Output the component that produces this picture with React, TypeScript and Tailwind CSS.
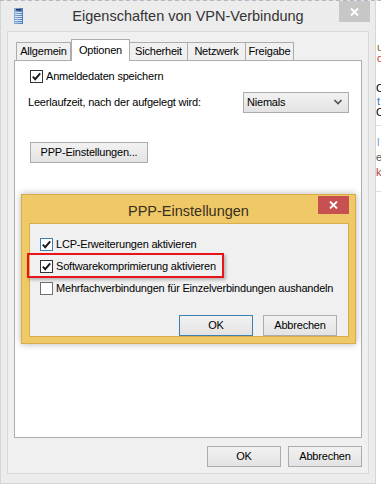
import React from "react";

type BoxProps = { checked: boolean; border: string };

const CheckBox = ({ checked, border }: BoxProps) => (
  <span className={`flex h-[13px] w-[13px] shrink-0 items-center justify-center bg-white border ${border}`}>
    {checked && (
      <svg width="11" height="11" viewBox="0 0 11 11">
        <path d="M1.8 5.6 L4.2 8.2 L9.2 2.4" stroke="#1a1a1a" strokeWidth="1.9" fill="none" />
      </svg>
    )}
  </span>
);

const WinButton = ({ label, className }: { label: string; className: string }) => (
  <button
    className={`flex h-[21px] items-center justify-center bg-linear-to-b from-[#f2f2f2] to-[#e3e3e3] text-[11px] tracking-[-0.2px] text-black ${className}`}
  >
    {label}
  </button>
);

const App = () => {
  return (
    <div className="flex h-[484px] w-[381px] flex-col overflow-hidden bg-white font-['Liberation_Sans',Arial,sans-serif]">
      {/* strip of the desktop behind the window */}
      <div className="h-px w-full shrink-0 bg-[repeating-linear-gradient(90deg,#c8b0a8_0px,#c8b0a8_2px,#a9bedc_2px,#a9bedc_4px,#e6e6e6_4px,#e6e6e6_7px)]" />

      <div className="flex flex-1">
        {/* main window */}
        <div className="relative flex w-[376px] shrink-0 flex-col border border-t-0 border-[#d6d6d6] bg-[#ececec]">
          {/* title bar */}
          <div className="grid h-[30px] shrink-0 grid-cols-[1fr_auto_1fr] items-start">
            <div className="pl-[13px] pt-[7px]">
              <svg width="9" height="16" viewBox="0 0 9 16">
                <defs>
                  <linearGradient id="srv" x1="0" y1="0" x2="1" y2="0">
                    <stop offset="0" stopColor="#8fb0dc" />
                    <stop offset="1" stopColor="#4d78b4" />
                  </linearGradient>
                </defs>
                <rect x="0" y="0" width="9" height="16" fill="url(#srv)" />
                <rect x="2" y="1" width="5" height="1.5" fill="#22385e" />
                <rect x="1" y="4" width="7" height="1" fill="#d8e4f4" />
                <rect x="1" y="6" width="7" height="1" fill="#d8e4f4" />
                <rect x="1" y="8" width="7" height="1" fill="#d8e4f4" />
                <rect x="1" y="10" width="7" height="1" fill="#d8e4f4" />
                <rect x="1" y="12" width="7" height="1" fill="#d8e4f4" />
                <rect x="1" y="14" width="7" height="1" fill="#b8cbe6" />
              </svg>
            </div>
            <div className="pt-[6px] text-[14.5px] leading-[18px] text-[#333]">Eigenschaften von VPN-Verbindung</div>
            <div className="flex justify-end pr-[5px]">
              <div className="flex h-[21px] w-[31px] items-center justify-center bg-[#c7c7c7]">
                <svg width="9" height="8" viewBox="0 0 9 8">
                  <path d="M1 0.5 L8 7.5 M8 0.5 L1 7.5" stroke="#fff" strokeWidth="1.8" />
                </svg>
              </div>
            </div>
          </div>

          {/* client area */}
          <div className="mx-[6px] mb-[9px] flex flex-1 flex-col border border-[#dadada] bg-[#f0f0f0] pl-[6px] pt-[7px]">
            {/* tabs */}
            <div className="relative z-10 flex h-[21px] items-end pl-[2px] text-[11px] tracking-[-0.2px] text-black">
              <div className="flex h-[18px] w-[55px] items-center justify-center border border-b-0 border-[#acacac] bg-[#f0f0f0]">Allgemein</div>
              <div className="mb-[-1px] flex h-[22px] w-[59px] items-start justify-center border border-b-0 border-[#acacac] bg-white pt-[2px]">Optionen</div>
              <div className="-ml-px flex h-[18px] w-[59px] items-center justify-center border border-b-0 border-[#acacac] bg-[#f0f0f0]">Sicherheit</div>
              <div className="-ml-px flex h-[18px] w-[59px] items-center justify-center border border-b-0 border-[#acacac] bg-[#f0f0f0]">Netzwerk</div>
              <div className="-ml-px flex h-[18px] w-[49px] items-center justify-center border border-b-0 border-[#acacac] bg-[#f0f0f0]">Freigabe</div>
            </div>

            {/* tab page */}
            <div className="flex h-[378px] w-[348px] flex-col border border-[#adadad] bg-white pl-[15px] pr-[12px] pt-[9px] text-[11px] tracking-[-0.2px] text-black">
              <div className="flex h-[13px] items-center gap-[3px]">
                <CheckBox checked border="border-[#333]" />
                <span>Anmeldedaten speichern</span>
              </div>
              <div className="mt-[9px] flex h-[20px] items-center justify-between">
                <span className="-ml-[2px]">Leerlaufzeit, nach der aufgelegt wird:</span>
                <div className="flex h-[21px] w-[106px] items-center justify-between border border-[#acacac] bg-linear-to-b from-[#f2f2f2] to-[#e3e3e3] pl-[3px] pr-[6px]">
                  <span>Niemals</span>
                  <svg width="8" height="6" viewBox="0 0 8 6">
                    <path d="M0.5 1 L4 4.5 L7.5 1" stroke="#555" strokeWidth="1.6" fill="none" />
                  </svg>
                </div>
              </div>
              <WinButton label="PPP-Einstellungen..." className="mt-[30px] w-[118px] border border-[#acacac]" />
            </div>

            {/* dialog buttons */}
            <div className="mt-[8px] flex justify-end gap-[7px] pr-[6px]">
              <WinButton label="OK" className="w-[74px] border border-[#acacac]" />
              <WinButton label="Abbrechen" className="w-[74px] border border-[#acacac]" />
            </div>
          </div>
        </div>

        {/* content behind the window */}
        <div className="relative flex-1 text-[11px] leading-[11px]">
          <span className="absolute left-[1px] top-[41px] text-[#8a5a3a]">u</span>
          <span className="absolute left-[1px] top-[52px] text-[#c44]">d</span>
          <span className="absolute left-[0px] top-[82px] text-black">C</span>
          <span className="absolute left-[1px] top-[95px] text-[#3a7abd]">t</span>
          <span className="absolute left-[0px] top-[106px] text-black">C</span>
          <div className="absolute left-0 top-[124px] h-px w-full bg-[#e0e0e0]" />
          <span className="absolute left-[1px] top-[136px] text-[#6fa0d8]">l</span>
          <span className="absolute left-[0px] top-[151px] text-[#555]">e</span>
          <span className="absolute left-[0px] top-[166px] text-[#a44]">k</span>
          <div className="absolute left-0 top-[190px] h-px w-full bg-[#e0e0e0]" />
        </div>
      </div>

      {/* PPP-Einstellungen dialog over the window */}
      <div className="absolute left-[21px] top-[194px] flex h-[150px] w-[335px] flex-col border border-[#d8ab45] bg-[#efc868] shadow-[0_0_7px_rgba(0,0,0,0.3)]">
        <div className="relative flex h-[28px] shrink-0 items-start justify-center">
          <span className="pt-[7px] text-[14.5px] leading-[18px] text-[#3a3020]">PPP-Einstellungen</span>
          <div className="absolute right-[6px] top-[1px] flex h-[18px] w-[31px] items-center justify-center bg-[#c75050]">
            <svg width="9" height="8" viewBox="0 0 9 8">
              <path d="M1 0.5 L8 7.5 M8 0.5 L1 7.5" stroke="#fff" strokeWidth="1.8" />
            </svg>
          </div>
        </div>
        <div className="relative ml-[7px] flex h-[114px] w-[320px] flex-col border border-[#d9ac4c] bg-[#f0f0f0] pl-[10px] pt-[14px] text-[11px] tracking-[-0.2px] text-black">
          <div className="flex h-[13px] items-center gap-[3px]">
            <CheckBox checked border="border-[#3c7fb1]" />
            <span>LCP-Erweiterungen aktivieren</span>
          </div>
          <div className="mt-[9px] flex h-[13px] items-center gap-[3px]">
            <CheckBox checked border="border-[#333]" />
            <span>Softwarekomprimierung aktivieren</span>
          </div>
          <div className="mt-[9px] flex h-[13px] items-center gap-[3px]">
            <CheckBox checked={false} border="border-[#707070]" />
            <span>Mehrfachverbindungen für Einzelverbindungen aushandeln</span>
          </div>
          <div className="mt-[20px] flex gap-[10px] pl-[139px]">
            <WinButton label="OK" className="w-[74px] border border-[#3c7fb1]" />
            <WinButton label="Abbrechen" className="w-[74px] border border-[#acacac]" />
          </div>
          {/* red highlight around the second option */}
          <div className="absolute left-[-3px] top-[29px] h-[25px] w-[197px] border-2 border-[#e8141a] shadow-[2px_2px_3px_rgba(0,0,0,0.25)]" />
        </div>
      </div>
    </div>
  );
};

export default App;
